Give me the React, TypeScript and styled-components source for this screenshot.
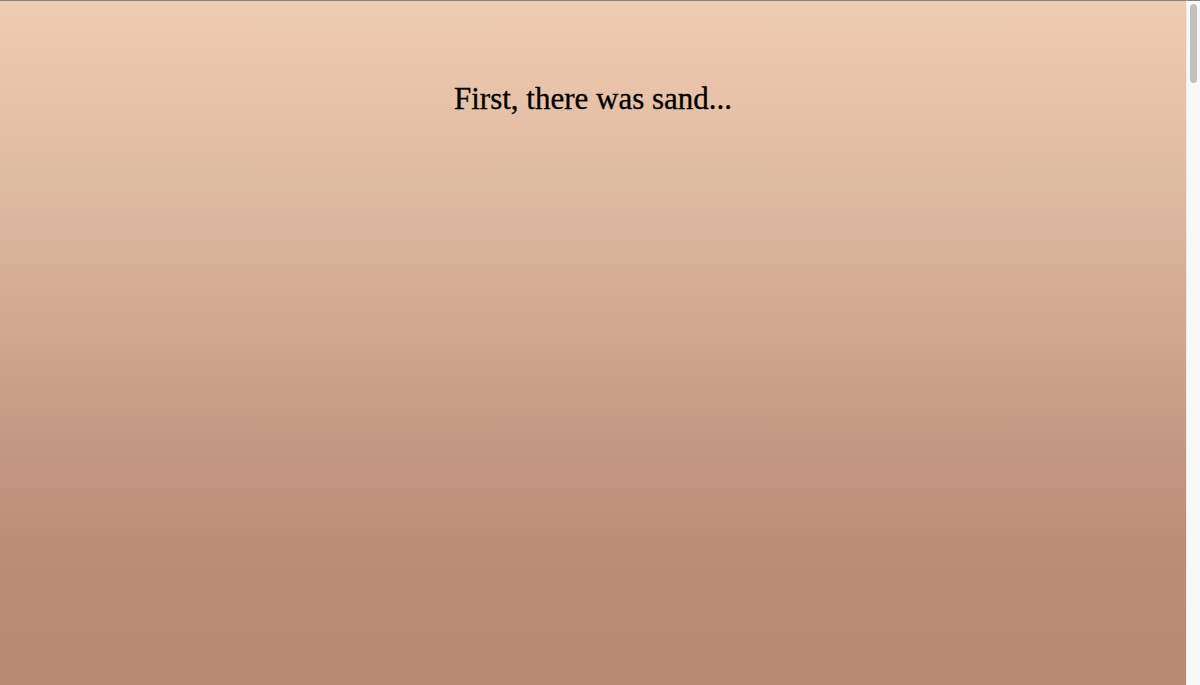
import React from "react";
import styled, { createGlobalStyle } from "styled-components";

const Global = createGlobalStyle`
  html, body {
    margin: 0;
    padding: 0;
  }
  body {
    background: #b68a73;
  }
`;

const Page = styled.div`
  min-height: 5900px;
  margin-right: 14px;
  border-top: 1px solid #858080;
  background: linear-gradient(
      to bottom,
      #efcbb1 0px,
      #e8c3aa 90px,
      #dfbba2 180px,
      #d6ae96 280px,
      #cda38b 360px,
      #c39882 450px,
      #bb8e77 540px,
      #b68a73 640px,
      #b68a73 100%
    );
  font-family: "Liberation Serif", "Times New Roman", serif;
  color: #000;
`;

const Title = styled.h1`
  margin: 0;
  padding-top: 78px;
  text-align: center;
  font-size: 31px;
  font-weight: normal;
  line-height: 40px;
  -webkit-text-stroke: 0.3px #000;
`;

const ScrollTrack = styled.div`
  position: fixed;
  top: 0;
  right: 0;
  width: 14px;
  height: 100vh;
  box-sizing: border-box;
  background: #f8f8f8;
  border-left: 1px solid #ececec;
  border-top: 1px solid #858080;
`;

const ScrollThumb = styled.div`
  position: absolute;
  top: 3px;
  left: 3px;
  width: 7px;
  height: 79px;
  border-radius: 4px;
  background: #c1c1c1;
`;

export default function App() {
  return (
    <>
      <Global />
      <Page>
        <Title>First, there was sand...</Title>
      </Page>
      <ScrollTrack>
        <ScrollThumb />
      </ScrollTrack>
    </>
  );
}
